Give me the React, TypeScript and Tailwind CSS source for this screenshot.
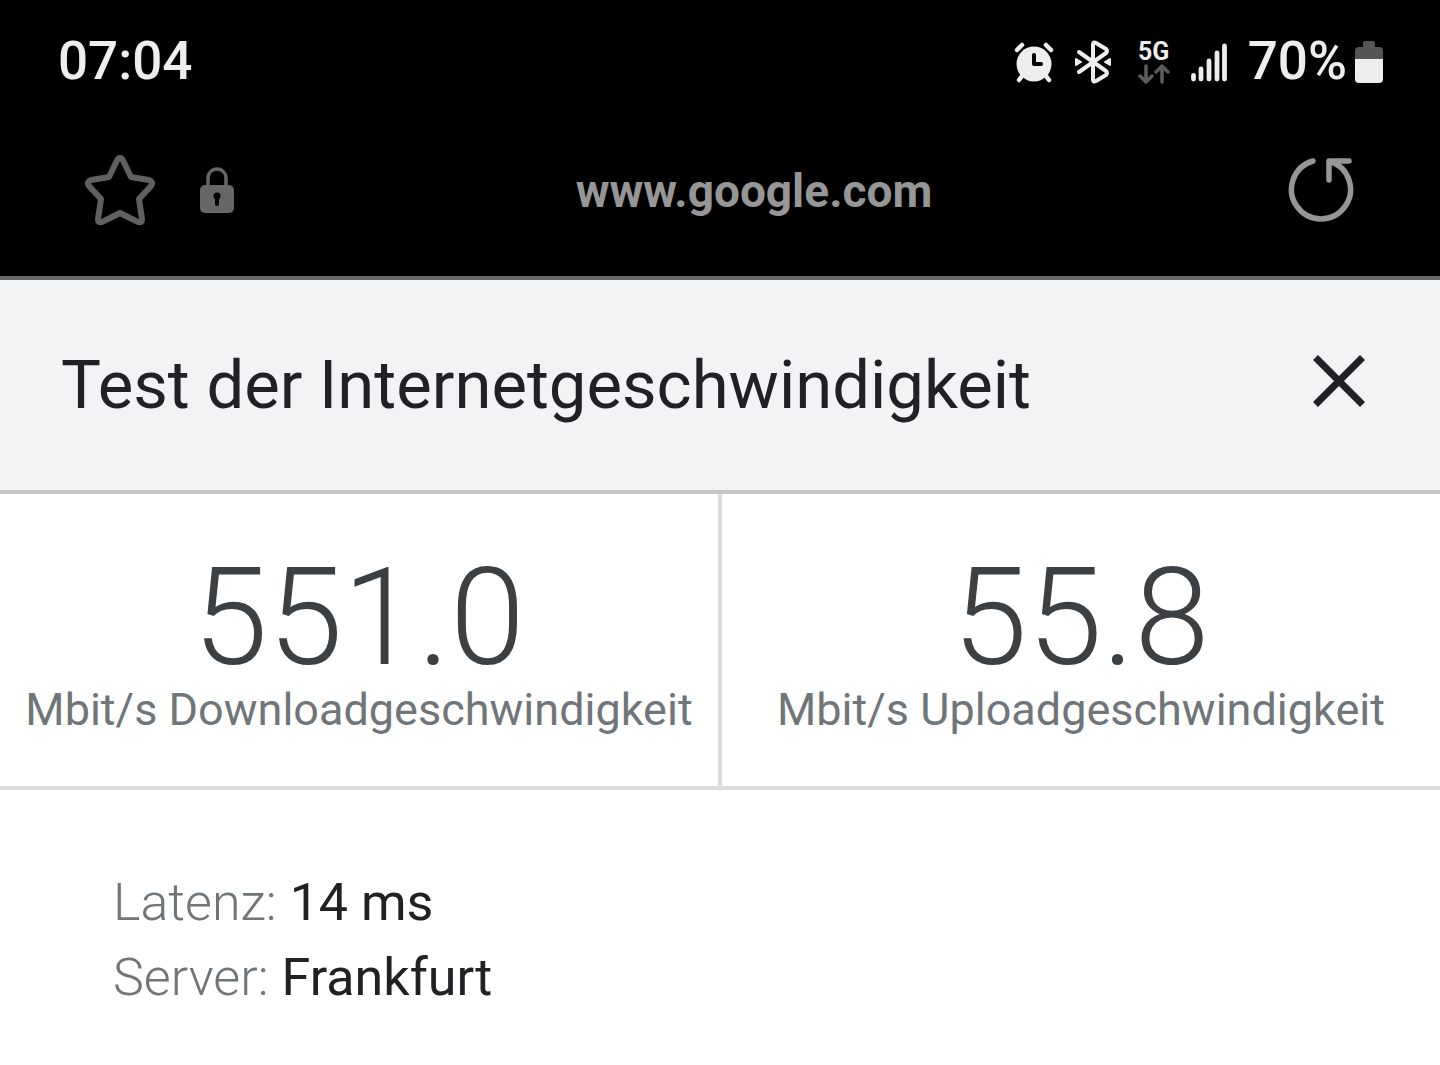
function AlarmIcon() {
  return (
    <svg width="40" height="42" viewBox="0 0 40 42" fill="none" aria-hidden="true">
      <g stroke="#eeeeee" strokeWidth="4.500" strokeLinecap="round">
        <path d="M3 9 8 4M32 4l5 5M8 35l-3 4M32 35l3 4" />
      </g>
      <circle cx="20" cy="23" r="17.500" fill="#eeeeee" />
      <path d="M20 14v9h7" stroke="#000" strokeWidth="4" strokeLinecap="round" strokeLinejoin="round" />
    </svg>
  );
}

function BluetoothIcon() {
  return (
    <svg width="38" height="44" viewBox="0 0 38 44" fill="none" aria-hidden="true">
      <path
        d="M5 12 32 31q2 2 0 4L22 41q-3 1.500-3-1.500V4.500q0-3 3-1.500L32 9q2 2 0 4L5 32"
        stroke="#eeeeee"
        strokeWidth="4"
        strokeLinecap="round"
        strokeLinejoin="round"
      />
      <path d="m2 19 5 3-5 3zM36 19l-5 3 5 3z" fill="#eeeeee" stroke="#eeeeee" strokeWidth="2" strokeLinejoin="round" />
    </svg>
  );
}

function DataArrowsIcon() {
  return (
    <svg width="32" height="20" viewBox="0 0 32 20" fill="none" stroke="#5c5c5c" strokeWidth="3.500" strokeLinecap="round" strokeLinejoin="round" aria-hidden="true">
      <path d="M8 2v15M2 12l6 6 6-6M24 18V3M18 8l6-6 6 6" />
    </svg>
  );
}

function SignalIcon() {
  return (
    <svg width="38" height="40" viewBox="0 0 38 40" stroke="#eeeeee" strokeWidth="4.800" strokeLinecap="round" aria-hidden="true">
      <path d="M3.500 33.500v3.500M11 27v10M19 19v18M27 11v26M34.500 4v33" />
    </svg>
  );
}

function BatteryIcon() {
  return (
    <svg width="28" height="42" viewBox="0 0 28 42" aria-label="Akku 70%">
      <path d="M10 0h8q2 0 2 2v4h4q4 0 4 4v9H0v-9q0-4 4-4h4V2q0-2 2-2z" fill="#555555" />
      <path d="M0 18h28v20q0 4-4 4H4q-4 0-4-4z" fill="#eeeeee" />
    </svg>
  );
}

function StarIcon() {
  return (
    <svg width="72" height="72" viewBox="0 0 72 72" fill="none" aria-hidden="true">
      <path
        d="M33.500 5.500Q36 2 38.500 5.500L47 23 65 26Q70 28 67 32L55 45 58 65Q58 70 53 67.500L36 59 19 67.500Q14 70 14 65L17 45 5 32Q2 28 7 26L25 23Z"
        stroke="#606060"
        strokeWidth="6"
        strokeLinejoin="round"
      />
    </svg>
  );
}

function LockIcon() {
  return (
    <svg width="34" height="46" viewBox="0 0 34 46" fill="none" aria-hidden="true">
      <path d="M8 20V11a9 9 0 0 1 18 0v9" stroke="#666666" strokeWidth="3.500" />
      <rect y="18" width="34" height="28" rx="5" fill="#666666" />
      <circle cx="17" cy="29" r="3.500" fill="#000" />
      <path d="M17 30v7" stroke="#000" strokeWidth="4" strokeLinecap="round" />
    </svg>
  );
}

function ReloadIcon() {
  return (
    <svg width="68" height="68" viewBox="0 0 68 68" fill="none" stroke="#969696" strokeWidth="5.500" strokeLinecap="round" strokeLinejoin="round" aria-hidden="true">
      <path d="M27 7a29.500 29.500 0 1 0 16 0M43 26V7h20" />
    </svg>
  );
}

function CloseIcon() {
  return (
    <svg width="52" height="52" viewBox="0 0 52 52" stroke="#202124" strokeWidth="7" aria-hidden="true">
      <path d="m2.500 2.500 47 47M49.500 2.500l-47 47" />
    </svg>
  );
}

function Result({ value, label }: { value: string; label: string }) {
  return (
    <div className="flex flex-1 flex-col items-center pt-14 pb-12">
      <div className="text-[135px] leading-[136px] font-light text-[#3c4043]">{value}</div>
      <div className="pb-1 text-[45px] leading-[48px] whitespace-nowrap text-[#70757a]">{label}</div>
    </div>
  );
}

export default function App() {
  return (
    <div className="min-h-screen bg-white font-[Roboto,sans-serif]">
      <div className="border-b-4 border-[#666666] bg-black">
        <div className="flex h-[124px] items-center justify-between pr-[57px] pl-[58px] text-[53px] leading-[60px] font-medium text-[#eeeeee]">
          <time className="pb-0.5">07:04</time>
          <div className="flex items-center">
            <AlarmIcon />
            <div className="ml-5">
              <BluetoothIcon />
            </div>
            <div className="ml-[26px] flex flex-col items-center">
              <span className="text-[25px] leading-6 font-bold">5G</span>
              <DataArrowsIcon />
            </div>
            <div className="ml-5">
              <SignalIcon />
            </div>
            <span className="ml-5 pb-0.5">70%</span>
            <div className="ml-2">
              <BatteryIcon />
            </div>
          </div>
        </div>
        <div className="flex h-[152px] items-start justify-between pr-[86px] pl-[84px]">
          <div className="flex flex-1 items-center gap-11 pt-[30px]">
            <button type="button" aria-label="Lesezeichen">
              <StarIcon />
            </button>
            <LockIcon />
          </div>
          <a href="https://www.google.com" className="ml-[70px] pt-[39px] text-[46px] leading-[56px] font-bold text-[#969696]">
            www.google.com
          </a>
          <div className="flex flex-1 justify-end pt-[30px]">
            <button type="button" aria-label="Neu laden">
              <ReloadIcon />
            </button>
          </div>
        </div>
      </div>
      <header className="flex h-[214px] items-center justify-between border-b-4 border-[#c4c5c6] bg-[#f1f3f4] pr-[75px] pl-[61px] text-[#202124]">
        <h1 className="text-[67px] leading-[80px]">Test der Internetgeschwindigkeit</h1>
        <button type="button" aria-label="Schließen" className="pb-2">
          <CloseIcon />
        </button>
      </header>
      <main>
        <section className="flex divide-x-4 divide-[#dddddd] border-b-4 border-[#dddddd]">
          <Result value="551.0" label="Mbit/s Downloadgeschwindigkeit" />
          <Result value="55.8" label="Mbit/s Uploadgeschwindigkeit" />
        </section>
        <section className="px-[113px] pt-[75px] text-[52px] leading-[75px] text-[#202124]">
          <p>
            <span className="font-light text-[#70757a]">Latenz:</span> 14 ms
          </p>
          <p>
            <span className="font-light text-[#70757a]">Server:</span> Frankfurt
          </p>
        </section>
      </main>
    </div>
  );
}
